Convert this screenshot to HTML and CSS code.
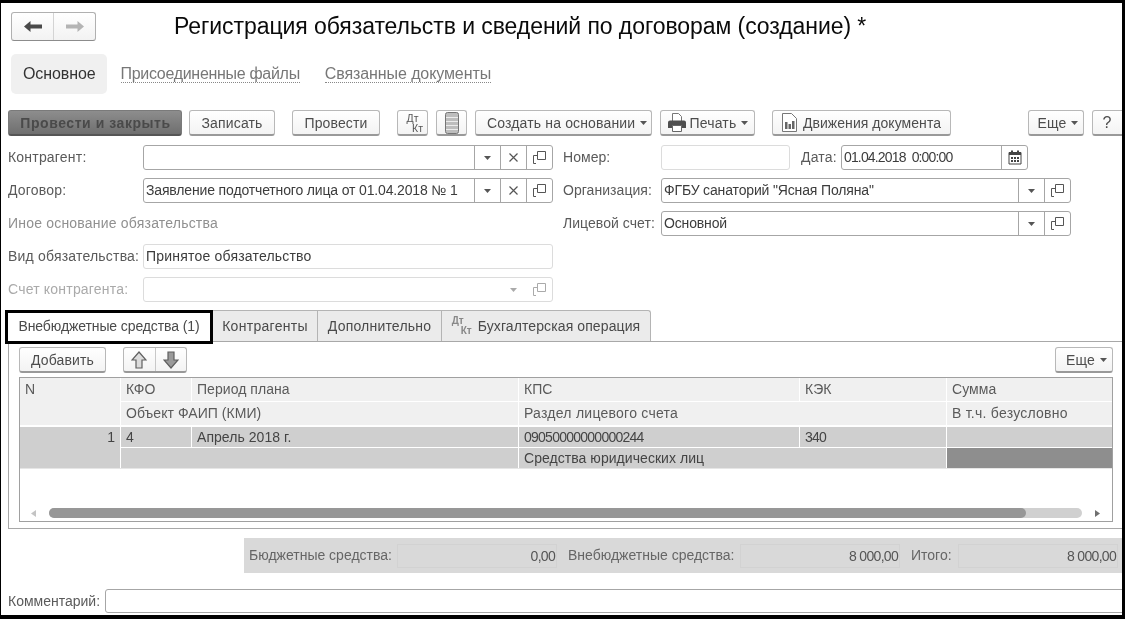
FILE: index.html
```html
<!DOCTYPE html>
<html lang="ru">
<head>
<meta charset="utf-8">
<title>Регистрация обязательств</title>
<link rel="stylesheet" href="styles.css">
</head>
<body>
<svg class="defs" width="0" height="0" aria-hidden="true">
  <symbol id="tri" viewBox="0 0 7 4"><path d="M0 0h7L3.5 4z"/></symbol>
  <symbol id="cross" viewBox="0 0 9 9"><path d="M.5.5l8 8M8.5.5l-8 8" fill="none" stroke="currentColor" stroke-width="1.200"/></symbol>
  <symbol id="copy" viewBox="0 0 13 13"><path d="M4.500.5h8v8h-8zM4.500 4.500H.5v8h2.500" fill="none" stroke="currentColor"/></symbol>
  <symbol id="up" viewBox="0 0 16 18"><path d="M8 1l7 8h-4v8H5V9H1z" fill="#dcdcdc" stroke="#5f5f5f" stroke-width="1.200"/></symbol>
  <symbol id="down" viewBox="0 0 16 18"><path d="M5 1h6v8h4l-7 8-7-8h4z" fill="#9a9a9a" stroke="#5f5f5f" stroke-width="1.200"/></symbol>
</svg>
<div class="frame">
  <header class="head">
    <div class="nav">
      <span class="nav-btn"><svg width="18" height="11" viewBox="0 0 18 11"><path d="M0 5.500L6.500 0v3.500H18v4H6.500V11z" fill="#4a4a4a"/></svg></span>
      <span class="nav-btn"><svg width="18" height="11" viewBox="0 0 18 11"><path d="M18 5.500L11.500 0v3.500H0v4h11.500V11z" fill="#b4b4b4"/></svg></span>
    </div>
    <h1 class="title">Регистрация обязательств и сведений по договорам (создание) *</h1>
  </header>

  <nav class="pages">
    <span class="page page-active">Основное</span>
    <span class="page page-files">Присоединенные файлы</span>
    <span class="page page-links">Связанные документы</span>
  </nav>

  <div class="toolbar">
    <button class="btn btn-primary">Провести и закрыть</button>
    <button class="btn w-save">Записать</button>
    <button class="btn w-post gap-l">Провести</button>
    <button class="btn btn-icon gap-l"><span class="dtkt"><span>Дт</span><span class="kt">Кт</span></span></button>
    <button class="btn btn-icon"><svg width="14" height="22" viewBox="0 0 14 22"><rect x=".5" y=".5" width="13" height="21" rx="2" fill="#bdbdbd" stroke="#757575"/><path d="M1 5.500h12M1 9.500h12M1 13.500h12M1 17.500h12" stroke="#ececec"/></svg></button>
    <button class="btn w-create">Создать на основании<svg class="tri" width="7" height="4"><use href="#tri"/></svg></button>
    <button class="btn w-print"><svg class="ic" width="20" height="21" viewBox="0 0 20 21"><path d="M5.500 1.500h6l3 3v5h-9z" fill="#fff" stroke="#777"/><path d="M1 10.500a2 2 0 0 1 2-2h14a2 2 0 0 1 2 2V16H1z" fill="#4f4f4f"/><path d="M5.500 13.500h9v6h-9z" fill="#fff" stroke="#666"/></svg>Печать<svg class="tri" width="7" height="4"><use href="#tri"/></svg></button>
    <button class="btn w-moves gap-l"><svg class="ic" width="15" height="19" viewBox="0 0 15 19"><path d="M.5.500h9l5 5v13H.5z" fill="#fff" stroke="#777"/><path d="M3 9h2.500v7H3zM6.500 11H9v5H6.500zM10 8h2.500v8H10z" fill="#666"/></svg>Движения документа</button>
    <button class="btn w-more push">Еще<svg class="tri" width="7" height="4"><use href="#tri"/></svg></button>
    <button class="btn w-help">?</button>
  </div>

  <div class="form">
    <div class="col col-left">
      <div class="row">
        <label class="lbl lbl-left">Контрагент:</label>
        <div class="field"><span class="val"></span><span class="fb"><svg width="7" height="4"><use href="#tri"/></svg></span><span class="fb"><svg width="9" height="9"><use href="#cross"/></svg></span><span class="fb"><svg width="13" height="13"><use href="#copy"/></svg></span></div>
      </div>
      <div class="row">
        <label class="lbl lbl-left">Договор:</label>
        <div class="field"><span class="val">Заявление подотчетного лица от 01.04.2018 № 1</span><span class="fb"><svg width="7" height="4"><use href="#tri"/></svg></span><span class="fb"><svg width="9" height="9"><use href="#cross"/></svg></span><span class="fb"><svg width="13" height="13"><use href="#copy"/></svg></span></div>
      </div>
      <div class="row"><span class="lbl muted">Иное основание обязательства</span></div>
      <div class="row">
        <label class="lbl lbl-left">Вид обязательства:</label>
        <div class="field field-soft"><span class="val val-wide">Принятое обязательство</span></div>
      </div>
      <div class="row is-off">
        <label class="lbl lbl-left">Счет контрагента:</label>
        <div class="field field-soft"><span class="val"></span><span class="fb"><svg width="7" height="4"><use href="#tri"/></svg></span><span class="fb"><svg width="13" height="13"><use href="#copy"/></svg></span></div>
      </div>
    </div>
    <div class="col col-right">
      <div class="row">
        <label class="lbl lbl-right">Номер:</label>
        <div class="field field-soft field-num"></div>
        <label class="lbl lbl-date">Дата:</label>
        <div class="field field-date"><span class="val digits">01.04.2018 &nbsp;0:00:00</span><span class="fb"><svg width="14" height="15" viewBox="0 0 14 15"><path d="M1 2.500h12v11.500H1z" fill="none" stroke="#444"/><path d="M1 2h12v3H1zM3 .5h2v3H3zM9 .5h2v3H9z" fill="#444"/><path d="M3 7h2v2H3zM6 7h2v2H6zM9 7h2v2H9zM3 10h2v2H3zM6 10h2v2H6zM9 10h2v2H9z" fill="#444"/></svg></span></div>
      </div>
      <div class="row">
        <label class="lbl lbl-right">Организация:</label>
        <div class="field field-wide"><span class="val">ФГБУ санаторий "Ясная Поляна"</span><span class="fb"><svg width="7" height="4"><use href="#tri"/></svg></span><span class="fb"><svg width="13" height="13"><use href="#copy"/></svg></span></div>
      </div>
      <div class="row">
        <label class="lbl lbl-right">Лицевой счет:</label>
        <div class="field field-wide"><span class="val">Основной</span><span class="fb"><svg width="7" height="4"><use href="#tri"/></svg></span><span class="fb"><svg width="13" height="13"><use href="#copy"/></svg></span></div>
      </div>
    </div>
  </div>

  <div class="tabs">
    <span class="tab tab-active">Внебюджетные средства (1)</span>
    <span class="tab t-contr">Контрагенты</span>
    <span class="tab t-extra">Дополнительно</span>
    <span class="tab t-acc"><span class="dtkt dtkt-tab"><span>Дт</span><span class="kt">Кт</span></span>Бухгалтерская операция</span>
  </div>

  <section class="panel">
    <div class="panel-bar">
      <button class="btn w-add">Добавить</button>
      <div class="arrows">
        <span class="arrow"><svg width="16" height="18"><use href="#up"/></svg></span>
        <span class="arrow"><svg width="16" height="18"><use href="#down"/></svg></span>
      </div>
      <button class="btn w-more2 push">Еще<svg class="tri" width="7" height="4"><use href="#tri"/></svg></button>
    </div>
    <div class="table">
      <div class="grid">
        <div class="th c-n">N</div>
        <div class="th">КФО</div>
        <div class="th">Период плана</div>
        <div class="th">КПС</div>
        <div class="th">КЭК</div>
        <div class="th">Сумма</div>
        <div class="th s-2 row-2">Объект ФАИП (КМИ)</div>
        <div class="th s-2 row-2 wide">Раздел лицевого счета</div>
        <div class="th row-2 wide">В т.ч. безусловно</div>
        <div class="td c-n td-num">1</div>
        <div class="td digits">4</div>
        <div class="td">Апрель 2018 г.</div>
        <div class="td digits">09050000000000244</div>
        <div class="td digits">340</div>
        <div class="td"></div>
        <div class="td s-2"></div>
        <div class="td s-2">Средства юридических лиц</div>
        <div class="td td-dark"></div>
      </div>
      <div class="scroll">
        <svg class="sa" width="5" height="7"><path d="M5 0v7L0 3.500z" fill="#c4c4c4"/></svg>
        <div class="track"><div class="thumb"></div></div>
        <svg class="sa" width="5" height="7"><path d="M0 0v7l5-3.500z" fill="#707070"/></svg>
      </div>
    </div>
  </section>

  <div class="totals">
    <span class="t-lbl t-a">Бюджетные средства:</span><span class="t-val digits">0,00</span>
    <span class="t-lbl t-b">Внебюджетные средства:</span><span class="t-val digits">8 000,00</span>
    <span class="t-lbl t-c">Итого:</span><span class="t-val digits">8 000,00</span>
  </div>

  <div class="comment">
    <label class="lbl lbl-comment">Комментарий:</label>
    <div class="field field-comment"></div>
  </div>
</div>
</body>
</html>
```

FILE: styles.css
```css
* { box-sizing: border-box; }
html, body { margin: 0; padding: 0; background: #fff; }
.defs { position: absolute; }
body { font: 14px/1.2 "Liberation Sans", Arial, sans-serif; color: #444; overflow: hidden; }

.frame {
  width: 1125px; height: 619px; overflow: hidden; background: #fff;
  border-style: solid; border-color: #000; border-width: 3px 3px 4px 1px;
  filter: blur(.3px);
}

.head { display: flex; align-items: flex-start; padding: 9px 0 0 10px; height: 38px; }
.nav { display: flex; width: 85px; height: 29px; border: 1px solid #b0b0b0; border-bottom-color: #8c8c8c; border-radius: 3px; background: linear-gradient(#fff, #f2f2f2); }
.nav-btn { flex: 1; display: flex; align-items: center; justify-content: center; }
.nav-btn + .nav-btn { border-left: 1px solid #d4d4d4; }
.title { margin: 1px 0 0 78px; font-size: 23px; font-weight: 400; line-height: 26px; letter-spacing: -.07px; color: #0a0a0a; white-space: nowrap; }

.pages { display: flex; align-items: center; height: 40px; margin-top: 13px; padding-left: 10px; gap: 25px; font-size: 16px; }
.page { color: #777; border-bottom: 1px dotted #888; line-height: 17px; }
.page-files { letter-spacing: -.3px; }
.page-links { letter-spacing: -.1px; }
.page-active { color: #333; border: 0; background: #f0f0f0; border-radius: 5px; height: 40px; line-height: 40px; padding: 0 11px 0 12px; margin-right: -11px; letter-spacing: -.1px; }

.toolbar { display: flex; align-items: stretch; gap: 8px; height: 26px; margin-top: 16px; padding-left: 7px; }
.btn {
  display: inline-flex; align-items: center; justify-content: center; height: 26px; padding: 0; flex: none;
  font: 14px "Liberation Sans", Arial, sans-serif; letter-spacing: .15px; color: #4d4d4d; white-space: nowrap;
  border: 1px solid #b8b8b8; border-bottom: 2px solid #999; border-radius: 3px;
  background: linear-gradient(#fff, #f3f3f3);
}
.btn-primary { width: 174px; background: linear-gradient(#8d8d8d, #6f6f6f); border-color: #7a7a7a #7a7a7a #555; font-weight: 700; letter-spacing: .55px; color: #4a4a4a; margin-right: -1px; padding-left: 1px; }
.btn-icon { width: 31px; }
.gap-l { margin-left: 9px; }
.push { margin-left: auto; }
.w-save { width: 86px; }
.w-post { width: 88px; }
.w-create { width: 177px; justify-content: flex-start; padding-left: 11px; }
.w-print { width: 95px; }
.w-moves { width: 179px; letter-spacing: .05px; }
.w-more { width: 56px; padding-left: 4px; }
.w-help { width: 40px; font-size: 16px; margin-right: -10px; padding-right: 10px; }
.w-add { width: 87px; }
.w-more2 { width: 58px; padding-left: 5px; }
.tri { margin-left: 5px; fill: #555; flex: none; }
.ic { margin-right: 3px; flex: none; }
.w-moves .ic { margin-right: 6px; }

.dtkt { display: flex; flex-direction: column; font-size: 10.500px; line-height: 10px; letter-spacing: 0; color: #555; width: 21px; }
.dtkt .kt { align-self: flex-end; }
.dtkt-tab { color: #888; margin-right: 6px; width: 20px; font-weight: 700; font-size: 10px; }

.form { display: flex; gap: 10px; margin-top: 9px; padding-left: 7px; }
.col { display: flex; flex-direction: column; gap: 8px; }
.col-left { width: 545px; }
.row { display: flex; align-items: center; height: 25px; }
.lbl { color: #5a5a5a; white-space: nowrap; flex: none; letter-spacing: .2px; }
.lbl-left { width: 135px; }
.lbl-right { width: 98px; letter-spacing: .05px; }
.lbl-date { width: 40px; margin-left: 11px; }
.muted { color: #909090; }
.is-off .lbl { color: #aaa; }
.is-off .fb { color: #aaa; fill: #aaa; }
.field { display: flex; align-items: stretch; flex: 1; height: 25px; border: 1px solid #a6a6a6; border-radius: 3px; background: #fff; }
.field-soft { border-color: #dcdcdc; }
.field-soft .fb { border-left: 0; }
.field-num { flex: none; width: 129px; }
.field-date { flex: none; width: 187px; }
.field-wide { flex: none; width: 410px; }
.val { flex: 1; padding-left: 2px; line-height: 23px; color: #3c3c3c; white-space: nowrap; letter-spacing: -.15px; }
.val-wide { letter-spacing: .2px; }
.val.digits { letter-spacing: -.85px; }
.fb { width: 26px; display: flex; align-items: center; justify-content: center; border-left: 1px solid #a6a6a6; color: #555; fill: #555; }

.tabs { display: flex; align-items: flex-start; height: 31px; margin-top: 8px; padding-left: 4px; position: relative; z-index: 1; }
.tab { display: flex; align-items: center; justify-content: center; height: 31px; background: #ebebeb; border: 1px solid #b4b4b4; border-bottom: 0; border-left: 0; color: #4a4a4a; white-space: nowrap; }
.tab-active { width: 208px; height: 34px; background: #fff; border: 3px solid #000; padding-bottom: 2px; letter-spacing: -.1px; }
.t-contr { width: 105px; letter-spacing: .3px; }
.t-extra { width: 124px; letter-spacing: .2px; }
.t-acc { width: 209px; border-radius: 0 3px 0 0; letter-spacing: .1px; }

.panel { margin-left: 7px; height: 188px; border: 1px solid #a8a8a8; border-right: 0; padding: 5px 0 0 10px; }
.panel-bar { display: flex; height: 26px; width: 1094px; gap: 17px; }
.arrows { display: flex; width: 64px; height: 26px; border: 1px solid #b8b8b8; border-bottom: 2px solid #999; border-radius: 3px; background: linear-gradient(#fff, #f3f3f3); }
.arrow { flex: 1; display: flex; align-items: center; justify-content: center; }
.arrow + .arrow { border-left: 1px solid #c8c8c8; }

.table { width: 1094px; height: 145px; margin-top: 4px; border: 1px solid #a0a0a0; display: flex; flex-direction: column; }
.grid { display: grid; grid-template-columns: 100px 70px 326px 280px 146px 1fr; grid-template-rows: 23px 24px 20px 20px; gap: 1px; border-bottom: 1px solid #e6e6e6; background: #fff; }
.th, .td { padding: 0 5px; line-height: 20px; white-space: nowrap; color: #5a5a5a; letter-spacing: .05px; }
.th { background: #f0f0f0; line-height: 23px; }
.th.wide { letter-spacing: .25px; }
.td { background: #cfcfcf; color: #444; }
.td.digits { letter-spacing: -.75px; }
.c-n { grid-row: span 2; }
.th.c-n, .row-2 { margin-bottom: 1px; }
.s-2 { grid-column: span 2; }
.td-num { text-align: right; padding-right: 5px; }
.td-dark { background: #8e8e8e; }

.scroll { display: flex; align-items: center; margin-top: auto; height: 10px; margin-bottom: 3px; padding: 0 12px 0 11px; gap: 13px; }
.sa { flex: none; }
.track { flex: 1; height: 10px; border-radius: 5px; background: #d0d0d0; }
.thumb { width: 977px; height: 10px; border-radius: 5px; background: #979797; }

.totals { display: flex; align-items: center; margin: 9px 0 0 243px; height: 35px; background: #d9d9d9; padding-left: 5px; }
.t-lbl { color: #666; white-space: nowrap; flex: none; }
.t-a { width: 148px; }
.t-b { width: 172px; margin-left: 11px; }
.t-c { width: 47px; margin-left: 11px; }
.t-val { flex: none; width: 160px; height: 24px; line-height: 22px; text-align: right; padding-right: 1px; border: 1px solid #d2d2d2; color: #555; }
.t-val.digits { letter-spacing: -.7px; }

.comment { display: flex; align-items: center; height: 24px; margin-top: 16px; padding-left: 7px; }
.lbl-comment { width: 97px; letter-spacing: 0; }
.field-comment { flex: none; width: 1030px; height: 24px; }
```
